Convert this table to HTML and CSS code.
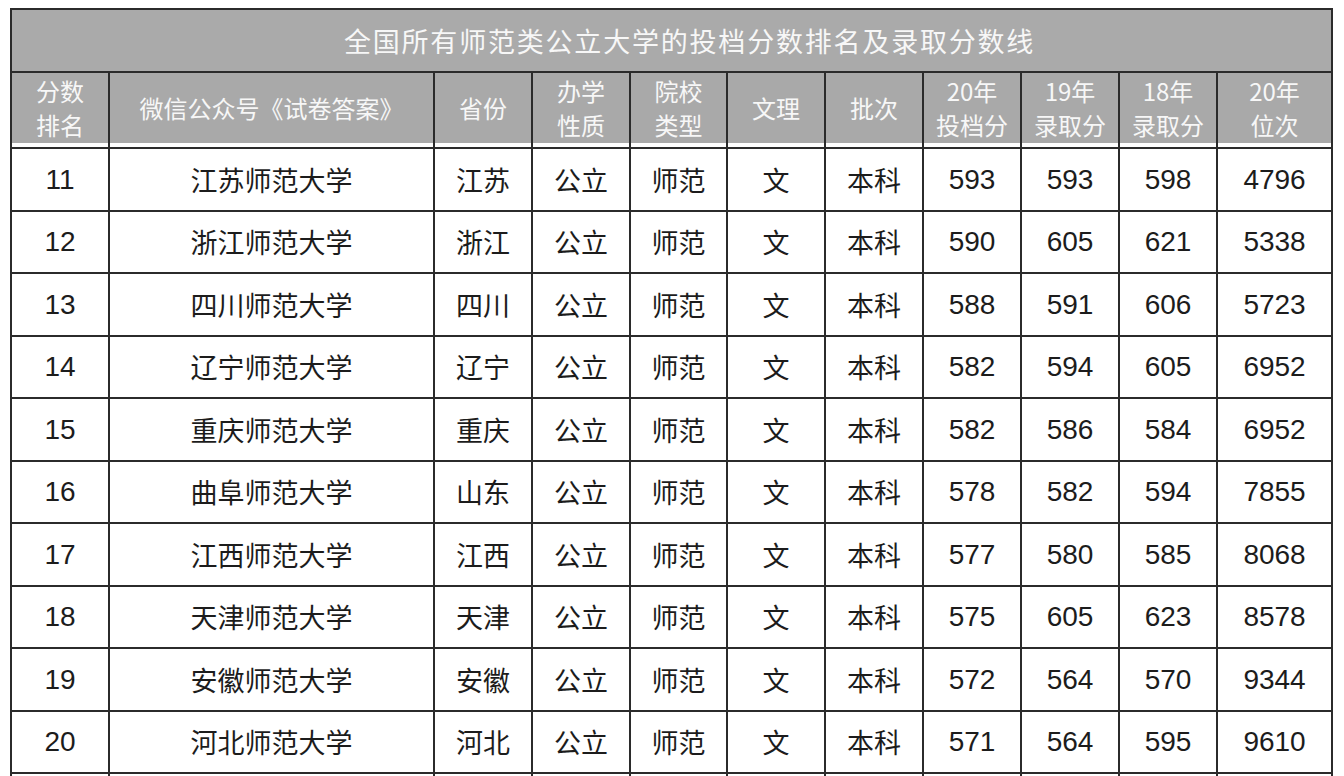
FILE: index.html
```html
<!DOCTYPE html>
<html lang="zh-CN">
<head>
<meta charset="utf-8">
<title>全国所有师范类公立大学的投档分数排名及录取分数线</title>
<link rel="stylesheet" href="styles.css">
</head>
<body>
<div class="page">
<table class="rank">
  <colgroup>
    <col class="c-rank"><col class="c-name"><col class="c-std"><col class="c-std"><col class="c-std97"><col class="c-std"><col class="c-std"><col class="c-std"><col class="c-std"><col class="c-std"><col class="c-last">
  </colgroup>
  <thead>
    <tr class="title-row"><th colspan="11" class="title"><span class="title-text">全国所有师范类公立大学的投档分数排名及录取分数线</span></th></tr>
    <tr class="head-row">
      <th>分数<br>排名</th>
      <th>微信公众号《试卷答案》</th>
      <th>省份</th>
      <th>办学<br>性质</th>
      <th>院校<br>类型</th>
      <th>文理</th>
      <th>批次</th>
      <th>20年<br>投档分</th>
      <th>19年<br>录取分</th>
      <th>18年<br>录取分</th>
      <th>20年<br>位次</th>
    </tr>
  </thead>
  <tbody>
    <tr class="r63"><td class="num">11</td><td>江苏师范大学</td><td>江苏</td><td>公立</td><td>师范</td><td>文</td><td>本科</td><td class="num">593</td><td class="num">593</td><td class="num">598</td><td class="num">4796</td></tr>
    <tr class="r62"><td class="num">12</td><td>浙江师范大学</td><td>浙江</td><td>公立</td><td>师范</td><td>文</td><td>本科</td><td class="num">590</td><td class="num">605</td><td class="num">621</td><td class="num">5338</td></tr>
    <tr class="r63"><td class="num">13</td><td>四川师范大学</td><td>四川</td><td>公立</td><td>师范</td><td>文</td><td>本科</td><td class="num">588</td><td class="num">591</td><td class="num">606</td><td class="num">5723</td></tr>
    <tr class="r62"><td class="num">14</td><td>辽宁师范大学</td><td>辽宁</td><td>公立</td><td>师范</td><td>文</td><td>本科</td><td class="num">582</td><td class="num">594</td><td class="num">605</td><td class="num">6952</td></tr>
    <tr class="r63"><td class="num">15</td><td>重庆师范大学</td><td>重庆</td><td>公立</td><td>师范</td><td>文</td><td>本科</td><td class="num">582</td><td class="num">586</td><td class="num">584</td><td class="num">6952</td></tr>
    <tr class="r62"><td class="num">16</td><td>曲阜师范大学</td><td>山东</td><td>公立</td><td>师范</td><td>文</td><td>本科</td><td class="num">578</td><td class="num">582</td><td class="num">594</td><td class="num">7855</td></tr>
    <tr class="r63"><td class="num">17</td><td>江西师范大学</td><td>江西</td><td>公立</td><td>师范</td><td>文</td><td>本科</td><td class="num">577</td><td class="num">580</td><td class="num">585</td><td class="num">8068</td></tr>
    <tr class="r62"><td class="num">18</td><td>天津师范大学</td><td>天津</td><td>公立</td><td>师范</td><td>文</td><td>本科</td><td class="num">575</td><td class="num">605</td><td class="num">623</td><td class="num">8578</td></tr>
    <tr class="r63"><td class="num">19</td><td>安徽师范大学</td><td>安徽</td><td>公立</td><td>师范</td><td>文</td><td>本科</td><td class="num">572</td><td class="num">564</td><td class="num">570</td><td class="num">9344</td></tr>
    <tr class="r62"><td class="num">20</td><td>河北师范大学</td><td>河北</td><td>公立</td><td>师范</td><td>文</td><td>本科</td><td class="num">571</td><td class="num">564</td><td class="num">595</td><td class="num">9610</td></tr>
    <tr class="r62"><td></td><td></td><td></td><td></td><td></td><td></td><td></td><td></td><td></td><td></td><td></td></tr>
  </tbody>
</table>
</div>
</body>
</html>
```

FILE: styles.css
```css
html, body {
  margin: 0;
  padding: 0;
  background: #ffffff;
}

.page {
  padding: 8px 0 0 10px;
}

.rank {
  border-collapse: collapse;
  table-layout: fixed;
  width: 1321px;
  font-family: "Noto Sans CJK SC", "Noto Sans", sans-serif;
  color: #1c1c1c;
}

.c-rank { width: 98px; }
.c-name { width: 325px; }
.c-std { width: 98px; }
.c-std97 { width: 97px; }
.c-last { width: 115px; }

.rank th,
.rank td {
  border: 2px solid #2b2b2b;
  padding: 0;
  text-align: center;
  vertical-align: middle;
}

.title-row { height: 63px; }

.title {
  background: #aaaaaa;
  color: #f7f7f7;
  font-size: 27px;
  font-weight: 400;
  border-bottom-color: #3a3a3a;
}

.title-text {
  display: inline-block;
  letter-spacing: 1.8px;
  margin-left: 36px;
}

.head-row { height: 76px; }

.head-row th {
  background: linear-gradient(#a9a9a9 0, #a9a9a9 calc(100% - 4px), #ffffff calc(100% - 4px));
  color: #f7f7f7;
  font-size: 24px;
  font-weight: 400;
  line-height: 34px;
  padding-bottom: 4px;
}

.r63 { height: 63px; }
.r62 { height: 62px; }

.rank td {
  font-size: 27px;
  line-height: 30px;
}

.rank td.num {
  font-family: "Liberation Sans", Arial, sans-serif;
  font-size: 28px;
}
```
